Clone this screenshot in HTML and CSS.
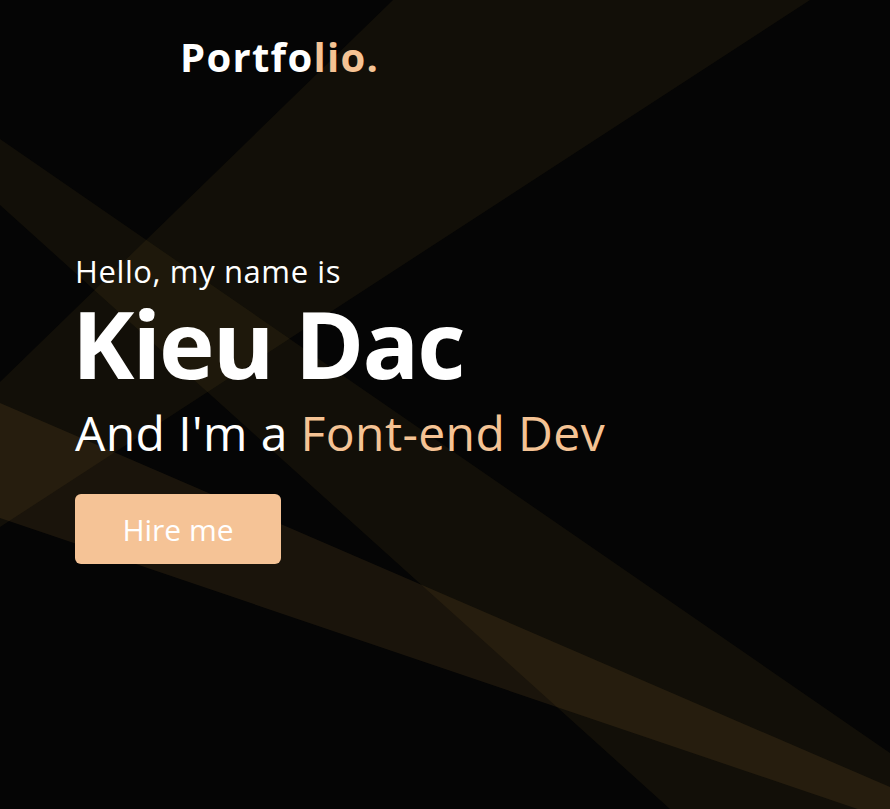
FILE: index.html
```html
<!DOCTYPE html>
<html lang="en">
<head>
<meta charset="utf-8">
<title>Portfolio</title>
<link rel="stylesheet" href="styles.css">
</head>
<body>
<div class="page">
  <svg class="beams" viewBox="0 0 890 809" preserveAspectRatio="none" aria-hidden="true">
    <polygon class="beam" points="393,0 810,0 0,527 0,382"/>
    <polygon class="beam" points="0,139 890,753 890,809 670,809 0,205"/>
    <polygon class="beam beam-bright" points="0,403 890,787 890,820 0,518"/>
  </svg>
  <header class="header">
    <div class="logo">Portfo<span class="accent">lio.</span></div>
  </header>
  <section class="hero">
    <p class="hello">Hello, my name is</p>
    <h1 class="name">Kieu Dac</h1>
    <p class="role">And I'm a <span class="accent">Font-end Dev</span></p>
    <button class="hire">Hire me</button>
  </section>
</div>
</body>
</html>
```
FILE: styles.css
```css
html, body {
  margin: 0;
  padding: 0;
  background: #050505;
}
body {
  font-family: "Open Sans", "Noto Sans", sans-serif;
  color: #ffffff;
}
.page {
  position: relative;
  width: 890px;
  height: 809px;
  overflow: hidden;
  background: #050505;
}
.beams {
  position: absolute;
  left: 0;
  top: 0;
  width: 890px;
  height: 809px;
  z-index: 0;
}
.beam {
  fill: rgba(200, 150, 60, 0.07);
}
.beam-bright {
  fill: rgba(200, 150, 60, 0.11);
}
.header {
  position: relative;
  z-index: 1;
  padding: 34px 0 0 180px;
}
.logo {
  font-size: 40px;
  line-height: 46px;
  font-weight: 700;
  letter-spacing: 1.3px;
}
.accent {
  color: #f5c394;
}
.hero {
  position: relative;
  z-index: 1;
  margin-top: 173px;
  padding-left: 75px;
  display: flex;
  flex-direction: column;
  align-items: flex-start;
}
.hello {
  margin: 0;
  font-size: 31px;
  line-height: 36px;
  font-weight: 400;
  letter-spacing: 0.6px;
}
.name {
  margin: 4px 0 0 -3px;
  font-size: 94px;
  line-height: 100px;
  font-weight: 700;
  letter-spacing: -2px;
}
.role {
  margin: 12px 0 0;
  font-size: 48px;
  line-height: 56px;
  font-weight: 400;
  letter-spacing: 0.4px;
}
.hire {
  margin-top: 33px;
  width: 206px;
  height: 70px;
  border: none;
  border-radius: 6px;
  background: #f5c396;
  color: #ffffff;
  font-family: "Open Sans", "Noto Sans", sans-serif;
  font-size: 30px;
  padding: 0;
  cursor: pointer;
}
```
